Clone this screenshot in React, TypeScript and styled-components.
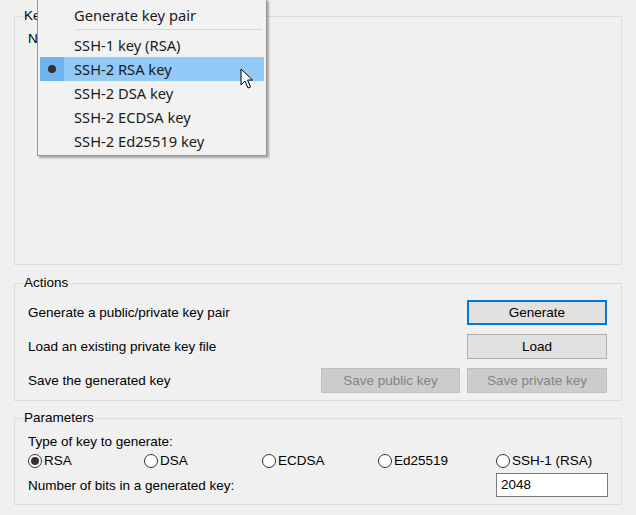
import React from "react";
import styled, { createGlobalStyle } from "styled-components";

const GlobalStyle = createGlobalStyle`
  html, body {
    margin: 0;
    padding: 0;
    background: #f0f0f0;
    font-family: "Liberation Sans", Arial, sans-serif;
    font-size: 13.5px;
    color: #000;
  }
`;

const Window = styled.div`
  position: relative;
  width: 636px;
  height: 515px;
  overflow: hidden;
  padding: 8px 14px 0 14px;
  box-sizing: border-box;
  display: flex;
  flex-direction: column;
`;

const Group = styled.fieldset<{ $h: number; $gap: number }>`
  margin: 0 0 ${(p) => p.$gap}px 0;
  width: 608px;
  box-sizing: border-box;
  height: ${(p) => p.$h}px;
  border: 1px solid #dcdcdc;
  padding: 0 13px 0 13px;
  min-width: 0;
`;

const Legend = styled.legend`
  padding: 0 1px;
  margin-left: -5px;
  line-height: 16px;
  font-size: 13.5px;
`;

const NoKey = styled.div`
  margin-top: 7px;
  line-height: 16px;
`;

const ActionRows = styled.div`
  display: flex;
  flex-direction: column;
  gap: 9px;
  margin-top: 9px;
`;

const ActionRow = styled.div`
  display: flex;
  align-items: center;
  height: 25px;
`;

const RowLabel = styled.span`
  flex: 1;
`;

const Buttons = styled.div`
  display: flex;
  gap: 7px;
  margin-right: 1px;
`;

const Button = styled.button<{ $focus?: boolean; $w?: number }>`
  width: ${(p) => p.$w ?? 140}px;
  height: 25px;
  box-sizing: border-box;
  font-family: "Liberation Sans", Arial, sans-serif;
  font-size: 13.5px;
  color: #000;
  background: #e1e1e1;
  border: ${(p) => (p.$focus ? "2px solid #0078d7" : "1px solid #adadad")};
  padding: 0;
  margin: 0;
  &:disabled {
    background: #cccccc;
    border: 1px solid #bfbfbf;
    color: #838383;
  }
`;

const Text = styled.div`
  line-height: 16px;
`;

const RadioRow = styled.div`
  display: grid;
  grid-template-columns: 116px 118px 116px 118px 1fr;
  height: 17px;
  align-items: center;
  margin-top: 2px;
`;

const RadioLabel = styled.label`
  display: flex;
  align-items: center;
  gap: 2px;
  line-height: 16px;
`;

const RadioCircle = styled.span<{ $on?: boolean }>`
  width: 14px;
  height: 14px;
  box-sizing: border-box;
  border: 1px solid #333;
  border-radius: 50%;
  background: #fff;
  display: inline-flex;
  align-items: center;
  justify-content: center;
  &::after {
    content: "";
    display: ${(p) => (p.$on ? "block" : "none")};
    width: 8px;
    height: 8px;
    border-radius: 50%;
    background: #333;
  }
`;

const BitsRow = styled.div`
  display: flex;
  align-items: center;
  justify-content: space-between;
  margin-top: 4px;
`;

const BitsInput = styled.div`
  width: 112px;
  height: 24px;
  box-sizing: border-box;
  border: 1px solid #7a7a7a;
  background: #fff;
  padding: 0 4px;
  line-height: 22px;
`;

/* popup menu over the Key group */
const Menu = styled.div`
  position: absolute;
  left: 37px;
  top: -1px;
  width: 230px;
  box-sizing: border-box;
  background: #f2f2f2;
  border: 1px solid #979797;
  padding: 3px 2px 2px 2px;
  box-shadow: 2px 2px 2px rgba(0, 0, 0, 0.3);
  font-family: "Noto Sans", "Segoe UI", sans-serif;
  font-size: 14.7px;
  color: #1a1a1a;
`;

const MenuItem = styled.div<{ $active?: boolean }>`
  display: flex;
  align-items: center;
  height: 24px;
  background: ${(p) => (p.$active ? "#91c9f7" : "transparent")};
`;

const Check = styled.span<{ $active?: boolean }>`
  width: 24px;
  height: 100%;
  margin-right: 10px;
  display: flex;
  align-items: center;
  justify-content: center;
  background: ${(p) => (p.$active ? "#6fb3ef" : "transparent")};
  &::after {
    content: "";
    display: ${(p) => (p.$active ? "block" : "none")};
    width: 8px;
    height: 8px;
    border-radius: 50%;
    background: #333;
  }
`;

const Separator = styled.div`
  height: 1px;
  background: #d7d7d7;
  margin: 2px 2px 3px 36px;
`;

const Cursor = styled.svg`
  position: absolute;
  left: 240px;
  top: 68px;
`;

const items = [
  "SSH-1 key (RSA)",
  "SSH-2 RSA key",
  "SSH-2 DSA key",
  "SSH-2 ECDSA key",
  "SSH-2 Ed25519 key",
];

const radios = ["RSA", "DSA", "ECDSA", "Ed25519", "SSH-1 (RSA)"];

export default function App() {
  return (
    <>
      <GlobalStyle />
      <Window>
        <Group $h={257} $gap={10}>
          <Legend>Key</Legend>
          <NoKey>No key.</NoKey>
        </Group>

        <Group $h={126} $gap={9}>
          <Legend>Actions</Legend>
          <ActionRows>
            <ActionRow>
              <RowLabel>Generate a public/private key pair</RowLabel>
              <Buttons>
                <Button $focus>Generate</Button>
              </Buttons>
            </ActionRow>
            <ActionRow>
              <RowLabel>Load an existing private key file</RowLabel>
              <Buttons>
                <Button>Load</Button>
              </Buttons>
            </ActionRow>
            <ActionRow>
              <RowLabel>Save the generated key</RowLabel>
              <Buttons>
                <Button $w={139} disabled>Save public key</Button>
                <Button disabled>Save private key</Button>
              </Buttons>
            </ActionRow>
          </ActionRows>
        </Group>

        <Group $h={95} $gap={0}>
          <Legend>Parameters</Legend>
          <Text style={{ marginTop: 8 }}>Type of key to generate:</Text>
          <RadioRow>
            {radios.map((r, i) => (
              <RadioLabel key={r}>
                <RadioCircle $on={i === 0} />
                {r}
              </RadioLabel>
            ))}
          </RadioRow>
          <BitsRow>
            <span>Number of bits in a generated key:</span>
            <BitsInput>2048</BitsInput>
          </BitsRow>
        </Group>

        <Menu>
          <MenuItem>
            <Check />
            Generate key pair
          </MenuItem>
          <Separator />
          {items.map((t) => (
            <MenuItem key={t} $active={t === "SSH-2 RSA key"}>
              <Check $active={t === "SSH-2 RSA key"} />
              {t}
            </MenuItem>
          ))}
        </Menu>

        <Cursor width="14" height="22" viewBox="0 0 14 22">
          <path
            d="M1 1 L1 17 L5 13 L8 20 L10.5 19 L7.5 12 L12.5 12 Z"
            fill="#fff"
            stroke="#000"
            strokeWidth="1"
            strokeLinejoin="miter"
          />
        </Cursor>
      </Window>
    </>
  );
}
